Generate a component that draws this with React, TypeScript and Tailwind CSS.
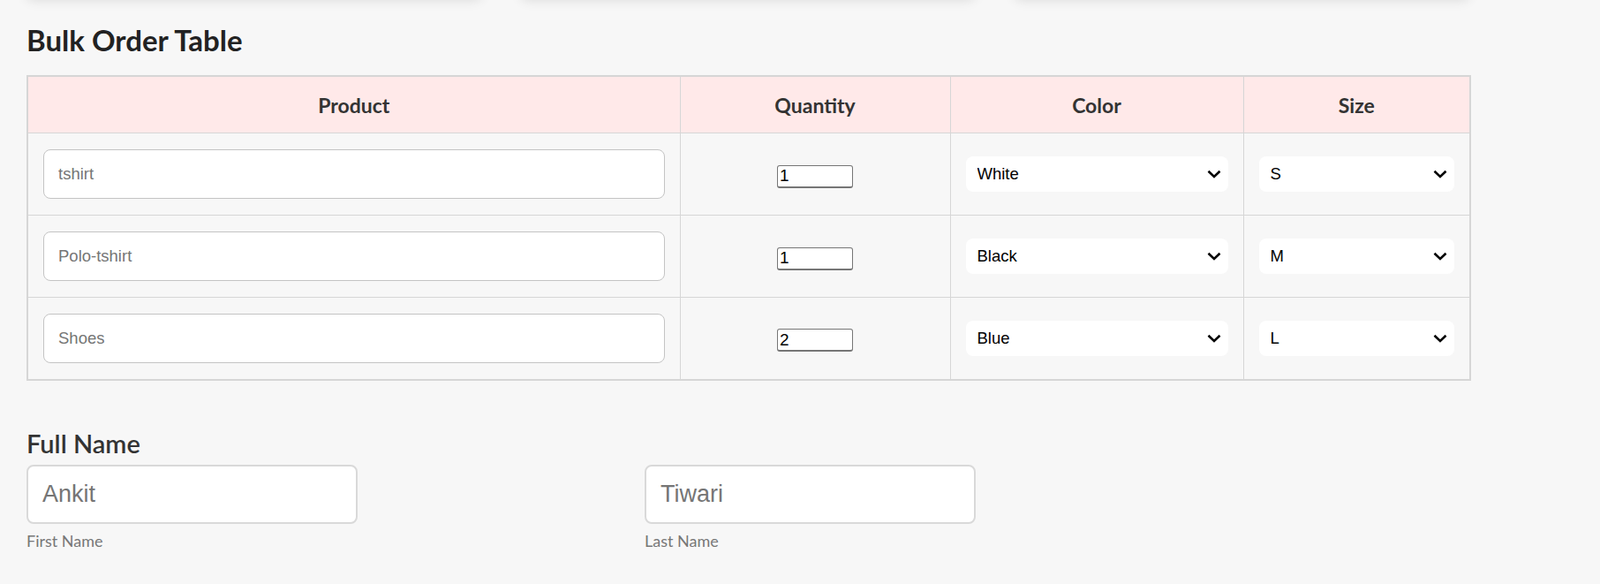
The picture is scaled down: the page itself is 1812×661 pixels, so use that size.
import React from "react";

const rows = [
  { p: "tshirt", q: "1", c: "White", s: "S" },
  { p: "Polo-tshirt", q: "1", c: "Black", s: "M" },
  { p: "Shoes", q: "2", c: "Blue", s: "L" },
];

const colors = ["White", "Black", "Blue", "Red", "Green"];
const sizes = ["S", "M", "L", "XL"];

function Chevron() {
  return (
    <svg
      width="16"
      height="10"
      viewBox="0 0 16 10"
      className="pointer-events-none absolute right-[8px] top-1/2 -translate-y-1/2"
      fill="none"
    >
      <path d="M1.5 1.8 L8 8 L14.5 1.8" stroke="#000" strokeWidth="2.6" strokeLinecap="butt" strokeLinejoin="miter" />
    </svg>
  );
}

function Select({ value, options }: { value: string; options: string[] }) {
  return (
    <div className="relative w-full">
      <select
        defaultValue={value}
        className="block h-[40px] w-full appearance-none rounded-lg bg-white pl-[13px] pr-8 font-['Liberation_Sans',Arial,sans-serif] text-[18.5px] text-black outline-none"
      >
        {options.map((o) => (
          <option key={o} value={o}>
            {o}
          </option>
        ))}
      </select>
      <Chevron />
    </div>
  );
}

export default function App() {
  return (
    <div className="min-h-[661px] bg-[#f7f7f7] px-[30px] pb-10 font-[Lato,sans-serif] text-[#222]">
      {/* cards scrolled above the viewport, only their shadows show */}
      <div className="-mt-[104px] flex h-[100px] gap-[45px] w-[1634px]">
        <div className="flex-1 rounded-lg bg-white shadow-[0_4px_14px_rgba(0,0,0,0.12)]" />
        <div className="flex-1 rounded-lg bg-white shadow-[0_4px_14px_rgba(0,0,0,0.12)]" />
        <div className="flex-1 rounded-lg bg-white shadow-[0_4px_14px_rgba(0,0,0,0.12)]" />
      </div>

      <h2 className="mt-[30px] text-[33px] font-bold leading-[1.2] text-[#222]">Bulk Order Table</h2>

      <table className="mt-[19px] w-[1634px] table-fixed border-collapse border-2 border-[#d6d6d6]">
        <colgroup>
          <col className="w-[739px]" />
          <col className="w-[306px]" />
          <col className="w-[332px]" />
          <col className="w-[257px]" />
        </colgroup>
        <thead>
          <tr>
            {["Product", "Quantity", "Color", "Size"].map((h) => (
              <th
                key={h}
                className="h-[65px] border border-[#d6d6d6] bg-[#ffe9e9] pt-[3px] text-center align-middle text-[23px] font-bold leading-[1.2] text-[#333]"
              >
                {h}
              </th>
            ))}
          </tr>
        </thead>
        <tbody>
          {rows.map((r) => (
            <tr key={r.p}>
              <td className="h-[93px] border border-[#d6d6d6] px-[17px] align-middle">
                <input
                  placeholder={r.p}
                  className="block h-[56px] w-full rounded-lg border border-[#c4c4c4] bg-white px-4 font-['Liberation_Sans',Arial,sans-serif] text-[18.5px] text-black outline-none placeholder:text-[#757575]"
                />
              </td>
              <td className="h-[93px] border border-[#d6d6d6] align-middle">
                <input
                  type="text"
                  defaultValue={r.q}
                  className="mx-auto mt-[5px] block h-[26px] w-[86px] rounded-[3px] border border-b-2 border-[#767676] bg-white px-[2px] font-['Liberation_Sans',Arial,sans-serif] text-[19px] leading-none text-black outline-none"
                />
              </td>
              <td className="h-[93px] border border-[#d6d6d6] px-[17px] align-middle">
                <Select value={r.c} options={colors} />
              </td>
              <td className="h-[93px] border border-[#d6d6d6] px-[17px] align-middle">
                <Select value={r.s} options={sizes} />
              </td>
            </tr>
          ))}
        </tbody>
      </table>

      <div className="mt-[54px]">
        <div className="text-[29px] font-semibold leading-[1.2] text-[#333]">Full Name</div>
        <div className="mt-[7px] flex">
          <div className="w-[700px]">
            <input
              placeholder="Ankit"
              className="block h-[67px] w-[375px] rounded-lg border-2 border-[#d9d9d9] bg-white px-4 font-['Liberation_Sans',Arial,sans-serif] text-[27px] text-black outline-none placeholder:text-[#757575]"
            />
            <div className="mt-[9px] text-[18px] leading-[1.2] text-[#777]">First Name</div>
          </div>
          <div className="w-[700px]">
            <input
              placeholder="Tiwari"
              className="block h-[67px] w-[375px] rounded-lg border-2 border-[#d9d9d9] bg-white px-4 font-['Liberation_Sans',Arial,sans-serif] text-[27px] text-black outline-none placeholder:text-[#757575]"
            />
            <div className="mt-[9px] text-[18px] leading-[1.2] text-[#777]">Last Name</div>
          </div>
        </div>
      </div>
    </div>
  );
}
